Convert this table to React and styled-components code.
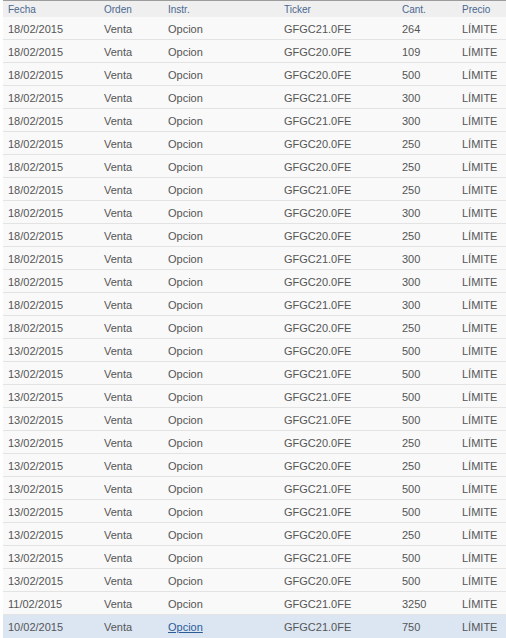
import React from 'react';
import styled, { createGlobalStyle } from 'styled-components';

const GlobalStyle = createGlobalStyle`
  body {
    margin: 0;
    background: #fff;
    font-family: "Liberation Sans", Arial, sans-serif;
  }
`;

const rows = [
  ['18/02/2015', 'GFGC21.0FE', '264'],
  ['18/02/2015', 'GFGC20.0FE', '109'],
  ['18/02/2015', 'GFGC20.0FE', '500'],
  ['18/02/2015', 'GFGC21.0FE', '300'],
  ['18/02/2015', 'GFGC21.0FE', '300'],
  ['18/02/2015', 'GFGC20.0FE', '250'],
  ['18/02/2015', 'GFGC20.0FE', '250'],
  ['18/02/2015', 'GFGC21.0FE', '250'],
  ['18/02/2015', 'GFGC20.0FE', '300'],
  ['18/02/2015', 'GFGC20.0FE', '250'],
  ['18/02/2015', 'GFGC21.0FE', '300'],
  ['18/02/2015', 'GFGC20.0FE', '300'],
  ['18/02/2015', 'GFGC21.0FE', '300'],
  ['18/02/2015', 'GFGC20.0FE', '250'],
  ['13/02/2015', 'GFGC20.0FE', '500'],
  ['13/02/2015', 'GFGC21.0FE', '500'],
  ['13/02/2015', 'GFGC21.0FE', '500'],
  ['13/02/2015', 'GFGC21.0FE', '500'],
  ['13/02/2015', 'GFGC20.0FE', '250'],
  ['13/02/2015', 'GFGC20.0FE', '250'],
  ['13/02/2015', 'GFGC21.0FE', '500'],
  ['13/02/2015', 'GFGC21.0FE', '500'],
  ['13/02/2015', 'GFGC20.0FE', '250'],
  ['13/02/2015', 'GFGC21.0FE', '500'],
  ['13/02/2015', 'GFGC20.0FE', '500'],
  ['11/02/2015', 'GFGC21.0FE', '3250'],
  ['10/02/2015', 'GFGC21.0FE', '750'],
];

const cols = '96px 64px 116px 118px 60px 1fr';

export default function App() {
  return (
    <>
      <GlobalStyle />
      <Wrapper>
        <Header>
          <HeadCell>Fecha</HeadCell>
          <HeadCell>Orden</HeadCell>
          <HeadCell>Instr.</HeadCell>
          <HeadCell>Ticker</HeadCell>
          <HeadCell>Cant.</HeadCell>
          <HeadCell>Precio</HeadCell>
        </Header>
        {rows.map((r, i) => {
          const selected = i === rows.length - 1;
          return (
            <Row key={i} selected={selected}>
              <Cell>{r[0]}</Cell>
              <Cell>Venta</Cell>
              <Cell>{selected ? <Link href="#">Opcion</Link> : 'Opcion'}</Cell>
              <Cell>{r[1]}</Cell>
              <Cell>{r[2]}</Cell>
              <Cell>LÍMITE</Cell>
            </Row>
          );
        })}
      </Wrapper>
    </>
  );
}

const Wrapper = styled.div`
  margin-left: 3px;
  border-top: 1px solid #9c9c9c;
`;

const Header = styled.div`
  display: grid;
  grid-template-columns: ${cols};
  height: 16px;
  align-items: center;
  background: #efefef;
`;

const HeadCell = styled.div`
  padding-left: 5px;
  font-size: 10px;
  color: #4a6890;
  white-space: nowrap;
`;

const Row = styled.div`
  display: grid;
  grid-template-columns: ${cols};
  height: 22px;
  align-items: center;
  border-bottom: 1px solid #e3e3e3;
  background: ${p => (p.selected ? '#dce6f3' : '#f9f9f9')};
  &:last-child {
    border-bottom-color: transparent;
  }
`;

const Cell = styled.div`
  padding: 1px 0 0 5px;
  font-size: 11px;
  color: #555;
  white-space: nowrap;
`;

const Link = styled.a`
  color: #2b5c98;
  text-decoration: underline;
`;
